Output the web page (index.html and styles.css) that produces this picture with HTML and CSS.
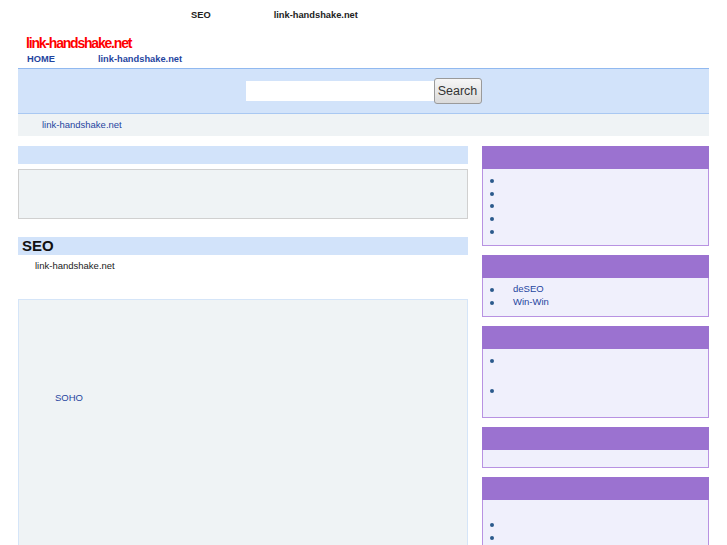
FILE: index.html
```html
<!DOCTYPE html>
<html>
<head>
<meta charset="utf-8">
<title>link-handshake.net</title>
<link rel="stylesheet" href="styles.css">
</head>
<body>
<div class="wrap">
  <div class="topline"><span>SEO</span><span class="top-site">link-handshake.net</span></div>
  <div class="logo">link-handshake.net</div>
  <div class="nav"><a class="nav-home">HOME</a><a class="nav-site">link-handshake.net</a></div>
  <div class="search">
    <div class="search-input"></div>
    <button class="search-btn">Search</button>
  </div>
  <div class="crumb">link-handshake.net</div>

  <div class="cols">
    <div class="main">
      <div class="bar"></div>
      <div class="box"></div>
      <h2 class="seo-h">SEO</h2>
      <p class="site-line">link-handshake.net</p>
      <div class="big">
        <a class="soho">SOHO</a>
      </div>
    </div>

    <div class="side">
      <div class="sbox">
        <div class="shead"></div>
        <ul class="slist s1">
          <li>&nbsp;</li><li>&nbsp;</li><li>&nbsp;</li><li>&nbsp;</li><li>&nbsp;</li>
        </ul>
      </div>
      <div class="sbox">
        <div class="shead"></div>
        <ul class="slist s2">
          <li>deSEO</li><li>Win-Win</li>
        </ul>
      </div>
      <div class="sbox">
        <div class="shead"></div>
        <ul class="slist s3">
          <li>&nbsp;</li><li>&nbsp;</li>
        </ul>
      </div>
      <div class="sbox">
        <div class="shead"></div>
        <div class="sempty"></div>
      </div>
      <div class="sbox">
        <div class="shead"></div>
        <ul class="slist s5">
          <li>&nbsp;</li><li>&nbsp;</li>
        </ul>
      </div>
    </div>
  </div>
</div>
</body>
</html>
```

FILE: styles.css
```css
html, body {
  margin: 0;
  padding: 0;
  background: #ffffff;
}
body {
  font-family: "Liberation Sans", Arial, sans-serif;
  color: #222;
}
.wrap {
  width: 691px;
  margin: 0 auto;
}
.topline {
  height: 32px;
  line-height: 30px;
  padding-left: 173px;
  font-size: 9.3px;
  font-weight: bold;
  color: #222;
}
.top-site {
  margin-left: 63px;
}
.logo {
  height: 22px;
  line-height: 22px;
  padding-left: 8px;
  font-size: 14px;
  font-weight: bold;
  letter-spacing: -1.2px;
  color: #ff0000;
}
.nav {
  height: 14px;
  line-height: 11px;
  padding-left: 9px;
  font-size: 9.3px;
  font-weight: bold;
}
.nav a {
  color: #1f45a0;
}
.nav-site {
  margin-left: 43px;
}
.search {
  height: 44px;
  border-top: 1px solid #91b9f0;
  border-bottom: 1px solid #a9c8f2;
  background: #d2e3fa;
  display: flex;
  align-items: center;
  justify-content: center;
}
.search-input {
  width: 188px;
  height: 20px;
  background: #fff;
}
.search-btn {
  width: 48px;
  height: 26px;
  margin: 0;
  padding: 0;
  border: 1px solid #9a9a9a;
  border-radius: 3px;
  background: linear-gradient(#f6f6f6, #dadada);
  font-family: "Liberation Sans", Arial, sans-serif;
  font-size: 12.5px;
  color: #333;
}
.crumb {
  height: 22px;
  line-height: 21px;
  padding-left: 24px;
  background: #eff3f5;
  font-size: 9.5px;
  color: #1f45a0;
}
.cols {
  display: flex;
  gap: 14px;
  margin-top: 10px;
}
.main {
  width: 450px;
}
.bar {
  height: 18px;
  background: #d2e3fa;
}
.box {
  margin-top: 5px;
  height: 48px;
  border: 1px solid #d0d0d0;
  background: #eff3f5;
}
.seo-h {
  margin: 18px 0 0;
  height: 18px;
  line-height: 18px;
  padding-left: 4px;
  background: #d2e3fa;
  font-size: 15px;
  font-weight: bold;
  color: #111;
}
.site-line {
  margin: 5px 0 0;
  padding-left: 17px;
  line-height: 12px;
  font-size: 9.5px;
  color: #222;
}
.big {
  margin-top: 27px;
  height: 300px;
  border: 1px solid #d5e5f8;
  background: #eff3f5;
  padding: 91px 0 0 36px;
  box-sizing: border-box;
  font-size: 9.5px;
  line-height: 13px;
}
.soho {
  color: #1f45a0;
}
.side {
  width: 227px;
  display: flex;
  flex-direction: column;
  gap: 9px;
}
.sbox {
  border: 1px solid #b892e2;
  background: #f0f0fc;
}
.shead {
  height: 23px;
  background: #9b72d0;
  margin: -1px -1px 0;
}
.slist {
  list-style: none;
  margin: 0;
  padding: 4px 0 8px;
  font-size: 9.5px;
  line-height: 13px;
}
.slist li {
  padding-left: 7px;
  color: #1f45a0;
}
.slist li::before {
  content: "";
  display: inline-block;
  width: 4px;
  height: 4px;
  border-radius: 50%;
  background: #2b5a8c;
  margin-right: 19px;
  vertical-align: 0;
}
.s1 {
  padding: 5px 0 7px;
  line-height: 12.7px;
}
.s2 {
  padding: 4px 0 8px;
}
.s3 {
  padding: 4px 0 4px;
}
.s3 li {
  height: 30px;
}
.s5 {
  padding: 17px 0 8px;
}
.sempty {
  height: 17px;
}
```
